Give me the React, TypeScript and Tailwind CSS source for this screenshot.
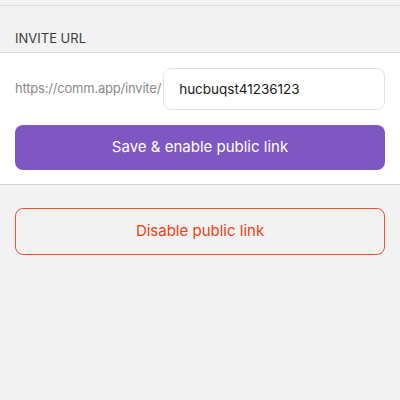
import React from "react";

export default function App() {
    return (
        <div className="min-h-[400px] w-[400px] bg-[#f2f2f2] font-['Inter','Liberation_Sans',sans-serif]">
            <div className="h-[6px] border-b border-[#dcdcdc] bg-[#f2f2f2]" />
            <div className="flex h-[46px] items-end px-[15px] pb-[6px]">
                <span className="text-[13px] leading-none text-[#3c3c3c] pb-[1px]">INVITE URL</span>
            </div>
            <div className="border-y border-[#d6d6d6] bg-white px-[15px] pt-[15px] pb-[14px]">
                <div className="flex items-center">
                    <span className="text-[13px] tracking-[-0.2px] text-[#8a8a8a]">https://comm.app/invite/</span>
                    <div className="ml-[2px] flex h-[42px] flex-1 items-center rounded-[8px] border border-[#e2e2e2] px-[15px]">
                        <span className="text-[13.5px] text-[#1a1a1a]">hucbuqst41236123</span>
                    </div>
                </div>
                <button className="mt-[15px] flex h-[45px] w-full items-center justify-center rounded-[8px] bg-[#7e57c2] text-[15px] text-white">
                    Save &amp; enable public link
                </button>
            </div>
            <div className="px-[15px] pt-[23px]">
                <button className="flex h-[47px] w-full items-center justify-center rounded-[8px] border border-[#f5502a] text-[15px] text-[#f0400f]">
                    Disable public link
                </button>
            </div>
        </div>
    );
}
